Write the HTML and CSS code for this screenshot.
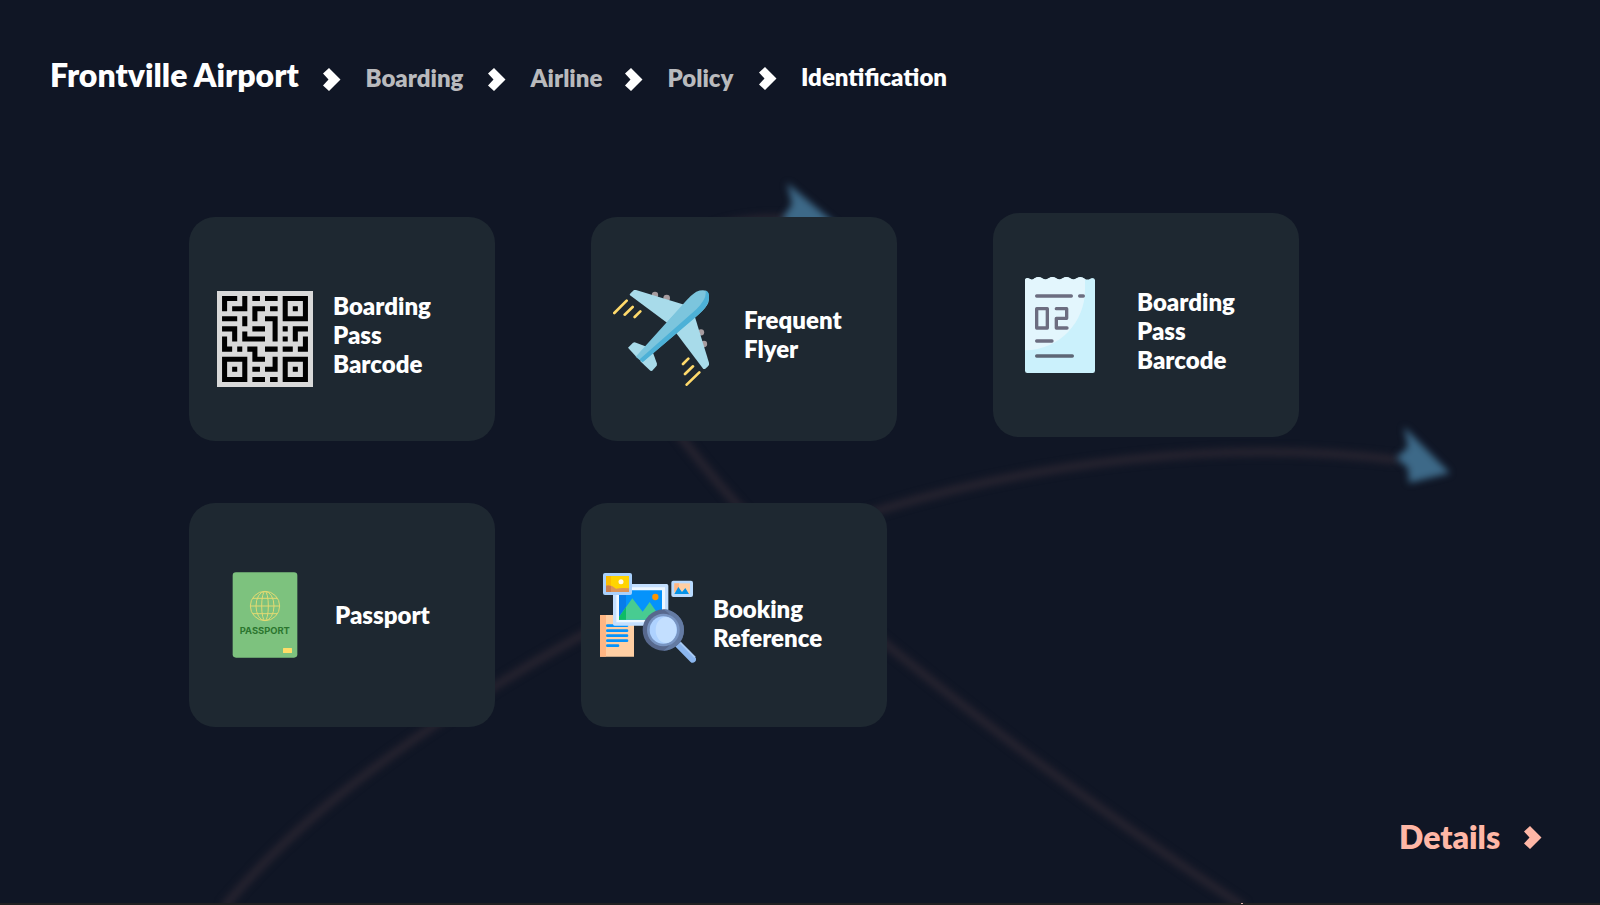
FILE: index.html
```html
<!DOCTYPE html>
<html lang="en">
<head>
<meta charset="utf-8">
<title>Frontville Airport</title>
<link rel="stylesheet" href="styles.css">
</head>
<body>
<svg class="routes" viewBox="0 0 1600 905" aria-hidden="true">
  <g class="route-lines">
    <path d="M224 907C300 816 400 745 500 683C620 608 745 552 880 510C1030 464 1220 438 1398 460"/>
    <path d="M1244 907C1130 832 1010 745 887 645C810 582 745 520 684 441C590 320 650 212 790 219"/>
  </g>
  <g class="route-heads">
    <path d="M1404 427L1450 473L1409 483L1408 468L1396 458L1408 447Z"/>
    <path d="M787 183L842 229L804 240L795 230L782 219L792 204Z"/>
  </g>
  <path fill="#202022" d="M0 903H1600V905H0Z"/>
  <path fill="#e0b5ab" d="M1241 903H1243V904H1241Z"/>
</svg>
<main class="page">
  <header class="crumbs">
    <h1 class="title">Frontville Airport</h1>
    <svg class="chevron" viewBox="0 0 18 23"><path d="M6 0L17.5 11.5L6 23L0 17.5L5.5 11.5L0 5.5Z"/></svg>
    <a class="crumb crumb-boarding">Boarding</a>
    <svg class="chevron" viewBox="0 0 18 23"><path d="M6 0L17.5 11.5L6 23L0 17.5L5.5 11.5L0 5.5Z"/></svg>
    <a class="crumb crumb-airline">Airline</a>
    <svg class="chevron" viewBox="0 0 18 23"><path d="M6 0L17.5 11.5L6 23L0 17.5L5.5 11.5L0 5.5Z"/></svg>
    <a class="crumb crumb-policy">Policy</a>
    <svg class="chevron chevron-last" viewBox="0 0 18 23"><path d="M6 0L17.5 11.5L6 23L0 17.5L5.5 11.5L0 5.5Z"/></svg>
    <a class="crumb crumb-current">Identification</a>
  </header>

  <section class="row row-first">
    <article class="card card-qr">
      <svg class="icon-qr" viewBox="0 0 19 19">
        <path fill="#d9d9d9" d="M0 0H19V19H0Z"/>
        <path d="M1 1H4V2H2V4H1ZM5 1H6V4H3V3H5ZM7 1H8.5V2H7ZM9.5 1H12V2H9.5ZM7 3H9.5V4H8V6H7ZM10.5 3H12V4H10.5ZM1 5H4V6H1ZM5 5H6V7H5ZM9.5 5H12V10H11V6H9.5ZM7 7H9.5V8H7ZM1 7H4V10H3V8H1ZM5 8H6V9H9.5V10H5ZM13 7H14V8H13ZM13 9H14V10H13ZM15 7H18V8H16V10H15ZM1 9H2V11H3V12H1ZM4 11H5V12H4ZM6 11H8V13H9.5V14H7V12H6ZM9.5 11H12V12H9.5ZM13 11H15V12H13ZM17 9H18V12H16V11H17ZM7 15H8.5V16H7ZM11 13H12V16H9.5V15H11ZM7 17H9.5V18H7ZM10.5 17H12V18H10.5ZM15 3H16V4H15ZM3 15H4V16H3ZM15 15H16V16H15Z"/>
        <path fill="none" stroke="#000" d="M13.5 1.5H17.5V5.5H13.5ZM1.5 13.5H5.5V17.5H1.5ZM13.5 13.5H17.5V17.5H13.5Z"/>
      </svg>
      <h2 class="label">Boarding<br>Pass<br>Barcode</h2>
    </article>

    <article class="card card-flyer">
      <svg class="icon-flyer" viewBox="84 360 288 288">
        <g fill="#a79c9f"><circle cx="210" cy="375" r="9.5"/><circle cx="245" cy="384" r="10"/><circle cx="348" cy="487" r="9.5"/><circle cx="357" cy="522" r="9.5"/></g>
        <g fill="#a8dbea">
          <path d="M135 376L134 373Q140 366 147 360L153 360L298 404L246 458Z"/>
          <path d="M328 435L372 578L372 585Q366 593 360 597L355 597L274 490Z"/>
          <path d="M129 533L144 518L149 517L185 530L155 562Z"/>
          <path d="M204 548L216 581L215 587L201 603L196 602L166 574Z"/>
        </g>
        <path fill="#7cc5dd" d="M152 560L300 396Q320 373 334 365Q350 358 364 362Q376 374 370 398Q364 413 340 434L172 577Z"/>
        <path fill="#4db1d7" d="M361 362Q369 362 371 370Q376 392 361 412Q351 425 328 445L173 577L164 568L335 417Q368 384 361 362Z"/>
        <path fill="none" stroke="#ffda6b" stroke-width="8" stroke-linecap="round" d="M125 392L88 429M143 411L119 434M166 424L149 441M310 566L294 582M324 589L300 612M343 607L305 644"/>
      </svg>
      <h2 class="label">Frequent<br>Flyer</h2>
    </article>

    <article class="card card-ticket">
      <svg class="icon-ticket" viewBox="120 216 210 288">
        <path fill="#cbf1fc" d="M120 224Q121 219 128 219L137 223Q142 226 149 220Q162 212 174 221Q183 226 191 220Q204 212 216 221Q225 226 233 220Q246 212 258 221Q267 226 275 220Q288 212 299 221Q308 226 314 222L321 219Q329 219 330 225V497Q330 504 323 504H127Q120 504 120 497Z"/>
        <path fill="#e3f6fd" d="M120 224Q121 219 128 219L137 223Q142 226 149 220Q162 212 174 221Q183 226 191 220Q204 212 216 221Q225 226 233 220Q246 212 258 221Q267 226 275 220Q288 212 300 222V255C300 350 225 435 120 436Z"/>
        <g fill="none" stroke="#6c6d80" stroke-width="10" stroke-linecap="round" stroke-linejoin="round">
          <path d="M155 273H259M284 273H295M155 311H187V369H155ZM214 311H245V340H214V369H246M155 408H201"/>
          <path stroke="#5d6675" d="M155 453H262"/>
        </g>
      </svg>
      <h2 class="label">Boarding<br>Pass<br>Barcode</h2>
    </article>
  </section>

  <section class="row row-second">
    <article class="card card-passport">
      <svg class="icon-passport" viewBox="156 231 198 258">
        <rect x="158" y="232" width="194" height="256" rx="10" fill="#7dc27e"/>
        <g fill="none" stroke="#e3da72" stroke-width="3">
          <circle cx="255" cy="333" r="44"/>
          <ellipse cx="255" cy="333" rx="27" ry="44"/>
          <ellipse cx="255" cy="333" rx="10" ry="44"/>
          <path d="M211 333H299M218 310H292M218 356H292"/>
        </g>
        <text class="passport-text" x="179.500" y="417" textLength="150" lengthAdjust="spacingAndGlyphs">PASSPORT</text>
        <rect x="309" y="459" width="27" height="15" rx="1.500" fill="#ffdd68"/>
      </svg>
      <h2 class="label">Passport</h2>
    </article>

    <article class="card card-booking">
      <svg class="icon-booking" viewBox="75 234 288 270">
        <path fill="#ffcfa3" d="M75 360H177V485H75Z"/><path fill="#ffb683" d="M75 360H93V485H75Z"/>
        <path fill="none" stroke="#0593fb" stroke-width="8" stroke-linecap="round" d="M97 392H156M97 407H156M97 422H156M97 437H156M97 452H129"/>
        <rect x="114" y="267" width="166" height="125" rx="5" fill="#c3dfff"/>
        <path fill="#eef7ff" d="M124 277H270V382H124Z"/>
        <path fill="#0593fb" d="M132 286H261V374H132Z"/><path fill="#087de9" d="M132 286H153V374H132Z"/>
        <path fill="#48cc91" d="M132 374V366L172 310L203 350L224 321L261 374Z"/><path fill="#0dbc66" d="M132 374V366L153 337V374Z"/>
        <circle cx="241" cy="306" r="9.500" fill="#ff9500"/>
        <rect x="84" y="234" width="87" height="66" rx="6" fill="#a9d0fb"/>
        <path fill="#ffd400" d="M93 243H162V291H93Z"/><path fill="#fdbd00" d="M93 243H108V291H93Z"/>
        <path fill="#dc9458" d="M93 272Q108 268 123 281Q140 277 162 280V291H93Z"/><path fill="#ca7d4c" d="M93 272Q101 270 108 273V291H93Z"/>
        <circle cx="138" cy="260" r="7.500" fill="#fff8e8"/>
        <rect x="289" y="257" width="65" height="49" rx="6" fill="#b9dbff"/>
        <path fill="#ffcfa3" d="M298 265H345V297H298Z"/><path fill="#ffb683" d="M298 265H312V290H298Z"/>
        <path fill="#0593e8" d="M298 297L310 276L321 291L331 279L342 297Z"/>
        <path fill="none" stroke="#8bb6ee" stroke-width="20" stroke-linecap="round" d="M309 448L353 493"/>
        <path fill="none" stroke="#a8cbf5" stroke-width="6" d="M316 443L360 487"/>
        <circle cx="265" cy="405" r="62" fill="#57688d"/>
        <path fill="#647ba3" d="M265 343A62 62 0 0 1 265 467Q296 450 296 405T265 343Z"/>
        <circle cx="265" cy="405" r="49" fill="#7894c1"/>
        <circle cx="265" cy="405" r="41" fill="#aed2ff"/>
        <ellipse cx="273" cy="405" rx="31" ry="39" fill="#c3dfff"/>
      </svg>
      <h2 class="label">Booking<br>Reference</h2>
    </article>
  </section>

  <footer class="footer">
    <a class="details">Details</a>
    <svg class="chevron chevron-details" viewBox="0 0 18 23"><path d="M6 0L17.500 11.500L6 23L0 17.500L5.500 11.500L0 5.500Z"/></svg>
  </footer>
</main>
</body>
</html>
```
FILE: styles.css
```css
* { box-sizing: border-box; }
body {
  margin: 0;
  background: #101625;
  color: #fff;
  font-family: Lato, "Open Sans", sans-serif;
  overflow: hidden;
}
.page {
  position: relative;
  display: flex;
  flex-direction: column;
  width: 1600px;
  height: 905px;
}
.routes { position: absolute; top: 0; left: 0; width: 1600px; height: 905px; }
.route-lines { fill: none; stroke: #26232f; stroke-width: 8.5; filter: blur(3.5px); }
.route-heads { fill: #3d6988; filter: blur(3.5px); }

.crumbs { display: flex; align-items: flex-start; height: 217px; padding: 55px 0 0 50px; }
.title { margin: 0; width: 273px; font-size: 32px; font-weight: 800; line-height: 39px; white-space: nowrap; }
.crumb { margin-top: 8px; font-size: 24px; font-weight: 800; line-height: 29px; color: #b9babd; white-space: nowrap; }
.crumb-boarding { width: 122.5px; }
.crumb-airline { width: 94.5px; }
.crumb-policy { width: 91px; }
.crumb-current { margin-top: 7px; color: #fff; }
.chevron { flex: none; width: 18px; height: 23px; margin: 13px 24.5px 0 0; fill: #fff; }
.chevron-last { margin-top: 12px; margin-right: 24.5px; }

.row { display: flex; align-items: flex-start; padding-left: 189px; }
.row-first { gap: 96px; height: 286px; }
.row-second { gap: 86px; height: 224px; }
.card { display: flex; align-items: flex-start; width: 306px; height: 224px; border-radius: 26px; background: #1e2831; }
.card svg { flex: none; }
.label { margin: 0; font-size: 24px; font-weight: 800; line-height: 29px; }

.card-qr { padding: 74px 0 0 28px; gap: 20px; }
.icon-qr { width: 96px; height: 96px; }
.card-flyer { padding: 73px 0 0 22px; gap: 35px; }
.icon-flyer { width: 96px; height: 96px; }
.card-flyer .label { margin-top: 15px; }
.card-ticket { margin-top: -4px; padding: 64px 0 0 32px; gap: 42px; }
.icon-ticket { width: 70px; height: 96px; }
.card-ticket .label { margin-top: 10px; }
.card-passport { padding: 69px 0 0 43px; gap: 37px; }
.icon-passport { width: 66px; height: 86px; }
.card-passport .label { margin-top: 28px; }
.passport-text { fill: #2c762f; font: 700 27px Inter, sans-serif; }
.card-booking { padding: 70px 0 0 19px; gap: 17px; }
.icon-booking { width: 96px; height: 90px; }
.card-booking .label { margin-top: 21px; }

.footer { display: flex; align-items: flex-start; justify-content: flex-end; margin-top: 90px; padding-right: 58px; }
.details { width: 125px; color: #ffb7a6; font-size: 32px; font-weight: 800; line-height: 39px; }
.chevron-details { margin: 9px 0 0; fill: #ffb7a6; }
```
